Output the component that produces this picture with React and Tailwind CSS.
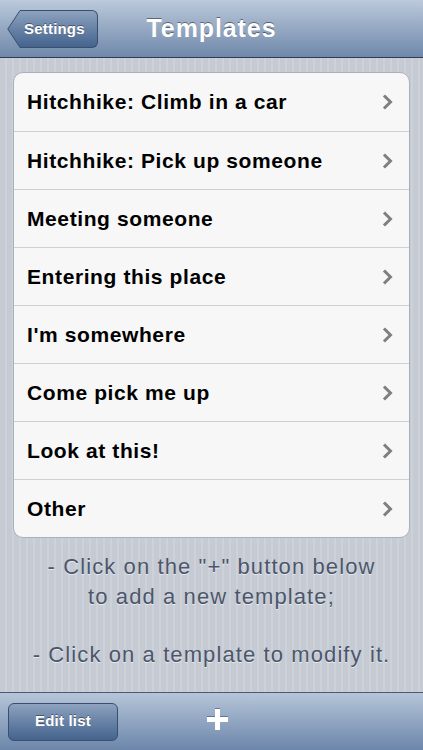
import React from 'react';

const items = [
  'Hitchhike: Climb in a car',
  'Hitchhike: Pick up someone',
  'Meeting someone',
  'Entering this place',
  "I'm somewhere",
  'Come pick me up',
  'Look at this!',
  'Other',
];

const Chevron = () => (
  <svg width="12" height="16" viewBox="0 0 12 16" className="shrink-0">
    <path d="M3 2.5 L8.5 8 L3 13.5" fill="none" stroke="#7f7f7f" strokeWidth="3" strokeLinecap="square" />
  </svg>
);

export default function App() {
  return (
    <div
      className="w-[423px] h-[750px] flex flex-col overflow-hidden bg-[#c7ccd5] bg-[repeating-linear-gradient(90deg,#c5cad3_0px,#c5cad3_5px,#ccd1da_5px,#ccd1da_7px)]"
      style={{ fontFamily: '"Liberation Sans", Arial, sans-serif' }}
    >
      <header className="relative h-[58px] shrink-0 flex items-center justify-center bg-gradient-to-b from-[#bccadb] to-[#6f88aa] border-b border-[#2d3d56]">
        <button className="absolute left-[7px] top-[10px] h-[38px] flex items-center">
          <svg width="14" height="38" viewBox="0 0 14 38" className="-mr-px">
            <defs>
              <linearGradient id="bk" x1="0" y1="0" x2="0" y2="1">
                <stop offset="0" stopColor="#8da2be" />
                <stop offset="1" stopColor="#44638e" />
              </linearGradient>
            </defs>
            <path d="M14 0.5 L13 0.5 L0.8 19 L13 37.5 L14 37.5 Z" fill="url(#bk)" stroke="#3a4f6e" strokeWidth="1" />
          </svg>
          <span className="h-[38px] pl-1 pr-3 flex items-center rounded-r-[6px] border border-l-0 border-[#3a4f6e] bg-gradient-to-b from-[#8da2be] to-[#44638e] text-white text-[15px] font-bold tracking-[0.2px] [text-shadow:0_-1px_0_rgba(0,0,0,0.4)]">
            Settings
          </span>
        </button>
        <h1 className="text-white text-[25px] font-bold tracking-[0.9px] [text-shadow:0_-1px_0_rgba(0,0,0,0.45)]">Templates</h1>
      </header>

      <main className="flex-1 flex flex-col">
        <ul className="mt-[14px] mx-[13px] rounded-[10px] bg-[#f7f7f7] border border-[#abb1ba] overflow-hidden">
          {items.map((t, i) => (
            <li
              key={t}
              className={`h-[58px] flex items-center justify-between pl-[13px] pr-[15px] ${i > 0 ? 'border-t border-[#cfd0d2]' : ''}`}
            >
              <span className="text-black text-[21px] font-bold tracking-[0.6px]">{t}</span>
              <Chevron />
            </li>
          ))}
        </ul>

        <div className="mt-[14px] text-center text-[#4c566a] text-[22px] tracking-[1.1px] leading-[30px] [text-shadow:0_1px_0_rgba(255,255,255,0.6)]">
          <p>- Click on the "+" button below</p>
          <p>to add a new template;</p>
          <p className="mt-[28px]">- Click on a template to modify it.</p>
        </div>
      </main>

      <footer className="h-[58px] shrink-0 flex items-center bg-gradient-to-b from-[#b6c5d9] to-[#6c86aa] border-t border-[#4a5a72]">
        <button className="ml-[8px] w-[110px] h-[38px] rounded-[6px] border border-[#3a4f6e] bg-gradient-to-b from-[#8da2be] to-[#44638e] text-white text-[15px] font-bold tracking-[0.2px] [text-shadow:0_-1px_0_rgba(0,0,0,0.4)]">
          Edit list
        </button>
        <svg width="25" height="25" viewBox="0 0 25 25" className="ml-[87px] -mt-[4px]">
          <path d="M12.5 2 V23 M2 12.5 H23" stroke="#2f425e" strokeWidth="5" transform="translate(0 -1)" opacity="0.5" />
          <path d="M12.5 2 V23 M2 12.5 H23" stroke="#ffffff" strokeWidth="5" />
        </svg>
      </footer>
    </div>
  );
}
